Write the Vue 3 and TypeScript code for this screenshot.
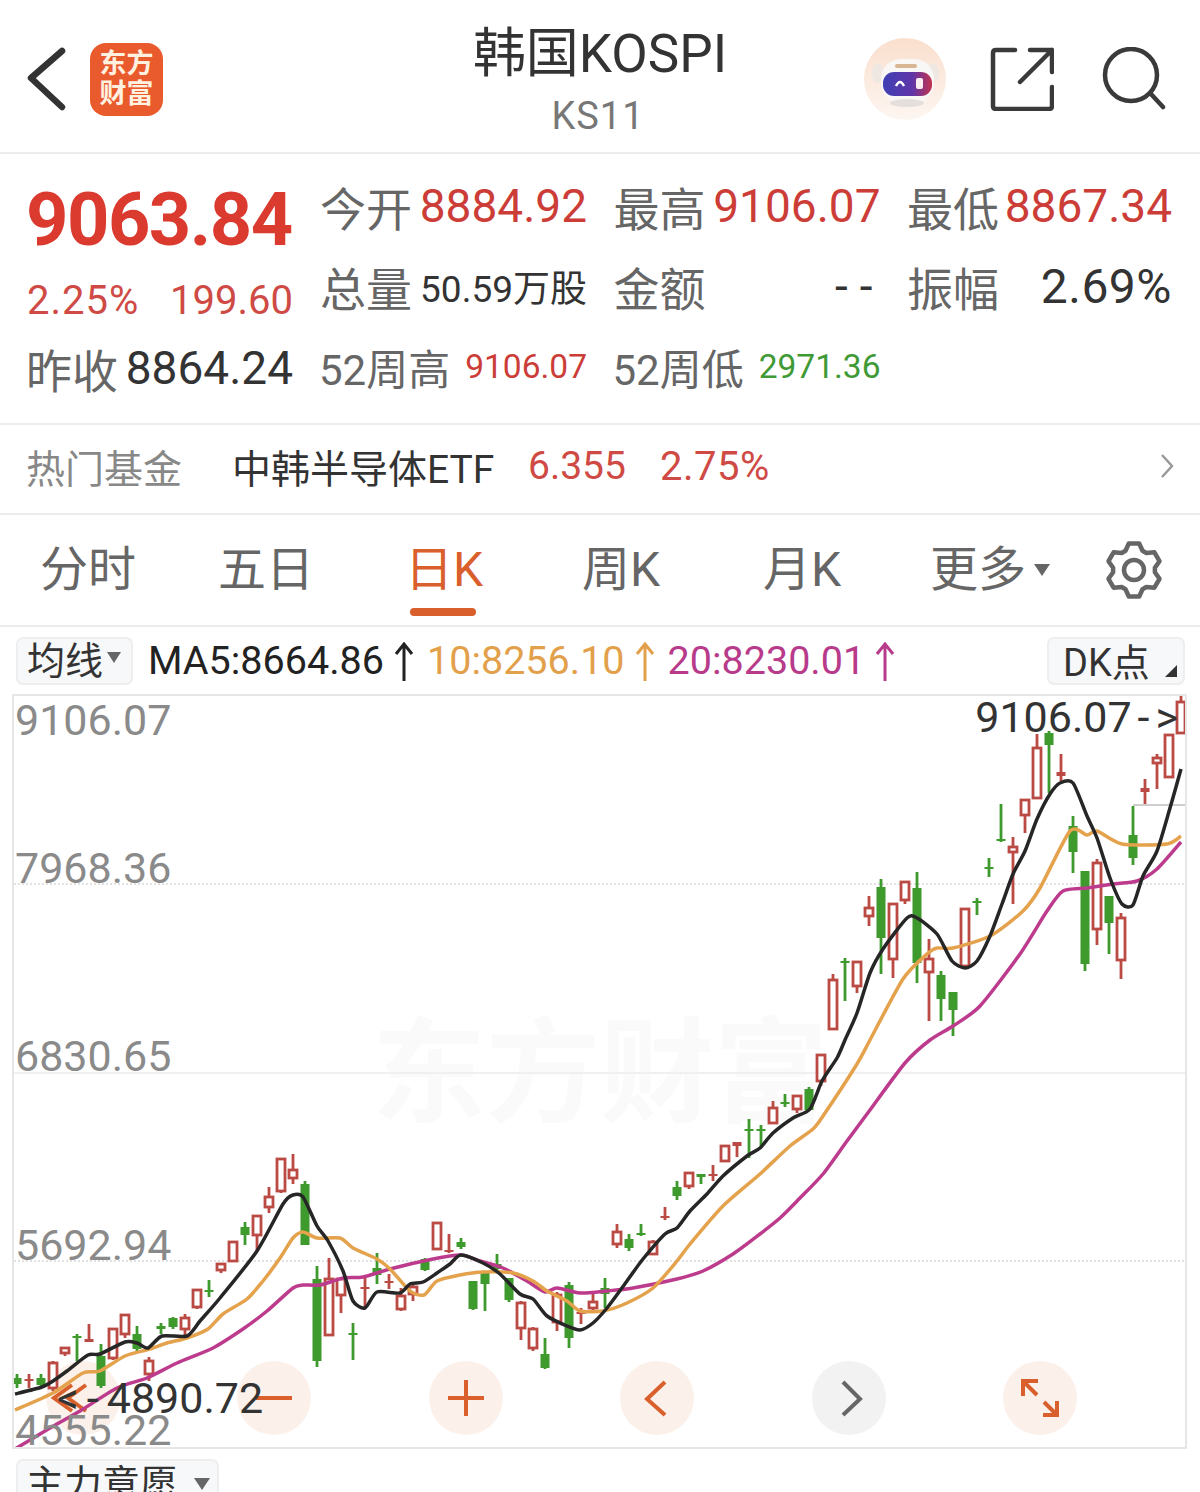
<template>
  <div class="page">
    <header class="topbar">
      <div class="topbar-left">
        <svg class="back" width="40" height="64" viewBox="0 0 40 64"><path d="M36 4 L5 31 L36 60" /></svg>
        <div class="logo">东方<br />财富</div>
      </div>
      <div class="title">
        <div class="name">韩国KOSPI</div>
        <div class="code">KS11</div>
      </div>
      <div class="topbar-right">
        <svg class="robot" width="84" height="84" viewBox="0 0 84 84">
          <defs>
            <linearGradient id="halo" x1="0" y1="0" x2="0" y2="1">
              <stop offset="0" stop-color="#fadfcd" />
              <stop offset="1" stop-color="#fdf6f1" />
            </linearGradient>
            <linearGradient id="visor" x1="0" y1="0" x2="1" y2="0">
              <stop offset="0" stop-color="#3f3fb4" />
              <stop offset="0.6" stop-color="#5f35a8" />
              <stop offset="1" stop-color="#c23350" />
            </linearGradient>
          </defs>
          <circle cx="42" cy="42" r="41" fill="url(#halo)" />
          <ellipse cx="15" cy="36" rx="6" ry="10" fill="#eee7e2" />
          <ellipse cx="70" cy="36" rx="6" ry="10" fill="#eee7e2" />
          <rect x="18" y="22" width="53" height="44" rx="20" fill="#f9f7f6" />
          <rect x="32" y="27" width="22" height="4" rx="2" fill="#d8b694" />
          <rect x="20" y="35" width="49" height="24" rx="11" fill="url(#visor)" />
          <path d="M33 49 Q37 41 41 49" fill="none" stroke="#fff" stroke-width="2.500" />
          <rect x="53" y="41" width="7" height="11" rx="2" fill="#fbeef0" />
          <ellipse cx="44" cy="66" rx="17" ry="4" fill="#e4dfdc" />
        </svg>
        <svg class="share" width="64" height="64" viewBox="0 0 64 64">
          <path d="M25 3 H6 Q3 3 3 6 V59 Q3 62 6 62 H59 Q62 62 62 59 V40" />
          <path d="M30 35 L62 3 M40 3 H62 V25" />
        </svg>
        <svg class="search" width="64" height="64" viewBox="0 0 64 64">
          <circle cx="29" cy="28" r="26" />
          <path d="M49 47 L61 60" />
        </svg>
      </div>
    </header>

    <section class="quote">
      <div class="quote-left">
        <div class="price">9063.84</div>
        <div class="change"><span>2.25%</span><span>199.60</span></div>
        <div class="prev"><span class="label">昨收</span><span class="val">8864.24</span></div>
      </div>
      <div class="quote-grid">
        <div v-for="c in cells" :key="c.label" class="cell">
          <span :class="['label', { week: c.label.startsWith('52') }]">{{ c.label }}</span>
          <span :class="['val', c.cls]">{{ c.value }}</span>
        </div>
      </div>
    </section>

    <section class="fund">
      <span class="fund-title">热门基金</span>
      <span class="fund-name">中韩半导体ETF</span>
      <span class="fund-price">6.355</span>
      <span class="fund-pct">2.75%</span>
      <svg class="fund-more" width="14" height="26" viewBox="0 0 14 26"><path d="M2 2 L12 13 L2 24" /></svg>
    </section>

    <nav class="tabs">
      <div v-for="t in tabs" :key="t" :class="['tab', { active: t === '日K' }]">{{ t }}</div>
      <div class="tab more">更多<i class="tri"></i></div>
      <svg class="gear" width="58" height="60" viewBox="-29 -30 58 60">
        <path :d="gearPath" />
        <circle r="10" />
      </svg>
    </nav>

    <div class="ma-row">
      <div class="pill ma-pill">均线<i class="tri small"></i></div>
      <span class="ma black">MA5:8664.86</span>
      <svg class="up" width="20" height="40" viewBox="0 0 20 40"><path d="M10 39 V2 M2 12 L10 2 L18 12" stroke="#222" /></svg>
      <span class="ma orange">10:8256.10</span>
      <svg class="up" width="20" height="40" viewBox="0 0 20 40"><path d="M10 39 V2 M2 12 L10 2 L18 12" stroke="#e3a04b" /></svg>
      <span class="ma purple">20:8230.01</span>
      <svg class="up" width="20" height="40" viewBox="0 0 20 40"><path d="M10 39 V2 M2 12 L10 2 L18 12" stroke="#b83a8a" /></svg>
      <div class="pill dk-pill">DK点<i class="corner"></i></div>
    </div>

    <div class="chart">
      <div class="watermark">东方财富</div>
      <div class="zoom-btns">
        <div v-for="b in buttons" :key="b.key" :class="['zbtn', { gray: b.gray }]">
          <svg width="74" height="74" viewBox="0 0 74 74"><path :d="b.d" /></svg>
        </div>
      </div>
      <svg class="plot" width="1171" height="751" viewBox="14 695 1171 751">
        <line x1="14" y1="883" x2="1185" y2="883" class="dot" />
        <line x1="14" y1="1072" x2="1185" y2="1072" class="solid" />
        <line x1="14" y1="1260" x2="1185" y2="1260" class="dot" />
        <line x1="1133" y1="804" x2="1185" y2="804" stroke="#cfcfcf" stroke-width="2" />
        <g v-for="c in bars" :key="c.x">
          <line :x1="c.x" :x2="c.x" :y1="c.wt" :y2="c.wb" :stroke="c.color" stroke-width="2.800" />
          <rect
            :x="c.x - (c.solid ? 4.500 : 4)"
            :y="c.top"
            :width="c.solid ? 9 : 8"
            :height="c.h"
            :fill="c.solid ? c.color : '#fff'"
            :stroke="c.solid ? 'none' : c.color"
            :stroke-width="c.solid ? 0 : 2.800"
          />
        </g>
        <path :d="ma20Path" class="ln" stroke="#bd3b8c" />
        <path :d="ma10Path" class="ln" stroke="#e5a24d" />
        <path :d="ma5Path" class="ln" stroke="#262626" />
      </svg>
      <span class="axis" style="top: 8px">9106.07</span>
      <span class="axis" style="top: 156px">7968.36</span>
      <span class="axis" style="top: 344px">6830.65</span>
      <span class="axis" style="top: 533px">5692.94</span>
      <span class="axis" style="top: 718px">4555.22</span>
      <span class="peak hi">9106.07<span class="dash">-</span>&gt;</span>
      <span class="peak lo">&lt;<span class="dash wide">-</span>4890.72</span>
    </div>

    <div class="sub-row">
      <div class="pill sub-pill">主力意愿<i class="tri"></i></div>
    </div>
  </div>
</template>

<script setup lang="ts">
type Bar = [number, number, number, number, number, 'r' | 'g'];
type Pt = [number, number];

const cells = [
  { label: '今开', value: '8884.92', cls: 'red' },
  { label: '最高', value: '9106.07', cls: 'red' },
  { label: '最低', value: '8867.34', cls: 'red' },
  { label: '总量', value: '50.59万股', cls: 'vol' },
  { label: '金额', value: '--', cls: 'dash' },
  { label: '振幅', value: '2.69%', cls: 'amp' },
  { label: '52周高', value: '9106.07', cls: 'red sm' },
  { label: '52周低', value: '2971.36', cls: 'green sm' },
];

const tabs = ['分时', '五日', '日K', '周K', '月K'];

const buttons = [
  { key: 'first', d: 'M26 24 L8 37 L26 50 M40 24 L22 37 L40 50', gray: false },
  { key: 'out', d: 'M19 37 H55', gray: false },
  { key: 'in', d: 'M19 37 H55 M37 19 V55', gray: false },
  { key: 'prev', d: 'M45 21 L27 38 L45 54', gray: false },
  { key: 'next', d: 'M31 21 L48 38 L31 54', gray: true },
  { key: 'full', d: 'M20 35 V20 H35 M20 20 L34 34 M54 40 V54 H40 M54 54 L41 41', gray: false },
];

// tooth outline of the settings icon, six teeth
const gearPath = (() => {
  const pts: string[] = [];
  for (let k = 0; k < 6; k++) {
    const a = -90 + 60 * k;
    for (const [off, r] of [[-24, 21], [-11, 27], [11, 27], [24, 21]]) {
      const t = ((a + off) * Math.PI) / 180;
      pts.push(`${(r * Math.cos(t)).toFixed(1)} ${(r * Math.sin(t)).toFixed(1)}`);
    }
  }
  return 'M' + pts.join(' L') + ' Z';
})();

// index, body top, body bottom, wick top, wick bottom (page px)
const raw: Bar[] = [
  [0, 1377, 1383, 1373, 1387, 'g'], [1, 1378, 1380, 1373, 1387, 'r'], [2, 1377, 1384, 1373, 1386, 'g'],
  [3, 1362, 1387, 1360, 1390, 'r'], [4, 1347, 1352, 1346, 1355, 'r'], [5, 1335, 1337, 1333, 1360, 'g'],
  [6, 1338, 1341, 1323, 1341, 'r'], [7, 1355, 1385, 1343, 1387, 'g'], [8, 1328, 1357, 1328, 1359, 'r'],
  [9, 1314, 1333, 1314, 1337, 'r'], [10, 1333, 1348, 1325, 1351, 'g'], [11, 1360, 1373, 1356, 1380, 'r'],
  [12, 1325, 1328, 1322, 1333, 'g'], [13, 1317, 1326, 1316, 1328, 'g'], [14, 1317, 1328, 1313, 1337, 'r'],
  [15, 1289, 1306, 1289, 1308, 'r'], [16, 1289, 1291, 1279, 1296, 'g'], [17, 1263, 1269, 1263, 1272, 'r'],
  [18, 1241, 1260, 1241, 1261, 'r'], [19, 1226, 1234, 1221, 1244, 'g'], [20, 1215, 1234, 1215, 1250, 'r'],
  [21, 1196, 1206, 1186, 1212, 'r'], [22, 1158, 1190, 1158, 1192, 'r'], [23, 1169, 1177, 1153, 1183, 'r'],
  [24, 1183, 1244, 1180, 1244, 'g'], [25, 1278, 1360, 1265, 1366, 'g'], [26, 1278, 1334, 1257, 1334, 'r'],
  [27, 1278, 1294, 1278, 1312, 'r'], [28, 1332, 1334, 1322, 1359, 'g'], [29, 1286, 1288, 1276, 1307, 'r'],
  [30, 1267, 1274, 1252, 1283, 'g'], [31, 1280, 1282, 1273, 1288, 'r'], [32, 1295, 1308, 1287, 1310, 'r'],
  [33, 1286, 1293, 1284, 1300, 'r'], [34, 1258, 1269, 1257, 1270, 'g'], [35, 1222, 1248, 1222, 1249, 'r'],
  [36, 1249, 1251, 1233, 1252, 'r'], [37, 1241, 1246, 1237, 1248, 'g'], [38, 1280, 1308, 1280, 1309, 'g'],
  [39, 1272, 1283, 1270, 1310, 'g'], [40, 1263, 1268, 1253, 1270, 'g'], [41, 1277, 1299, 1277, 1301, 'g'],
  [42, 1302, 1327, 1300, 1339, 'r'], [43, 1328, 1347, 1326, 1350, 'r'], [44, 1353, 1367, 1337, 1368, 'g'],
  [45, 1294, 1321, 1291, 1330, 'r'], [46, 1284, 1337, 1281, 1347, 'g'], [47, 1311, 1313, 1307, 1323, 'r'],
  [48, 1301, 1307, 1290, 1310, 'r'], [49, 1287, 1293, 1277, 1307, 'g'], [50, 1231, 1243, 1223, 1247, 'r'],
  [51, 1238, 1247, 1233, 1250, 'g'], [52, 1232, 1234, 1223, 1235, 'g'], [53, 1241, 1253, 1239, 1254, 'r'],
  [54, 1215, 1217, 1206, 1219, 'r'], [55, 1186, 1195, 1180, 1199, 'g'], [56, 1172, 1185, 1172, 1188, 'r'],
  [57, 1173, 1176, 1173, 1183, 'g'], [58, 1173, 1175, 1164, 1180, 'r'], [59, 1145, 1160, 1145, 1161, 'r'],
  [60, 1141, 1145, 1141, 1156, 'r'], [61, 1128, 1130, 1118, 1157, 'g'], [62, 1128, 1130, 1124, 1145, 'g'],
  [63, 1107, 1122, 1100, 1123, 'r'], [64, 1101, 1103, 1093, 1106, 'g'], [65, 1095, 1108, 1095, 1112, 'r'],
  [66, 1088, 1109, 1086, 1109, 'g'], [67, 1054, 1080, 1054, 1085, 'r'], [68, 979, 1028, 973, 1029, 'r'],
  [69, 960, 962, 957, 1000, 'g'], [70, 961, 985, 961, 992, 'r'], [71, 907, 915, 895, 925, 'r'],
  [72, 886, 937, 878, 973, 'g'], [73, 903, 958, 903, 977, 'r'], [74, 881, 899, 881, 903, 'r'],
  [75, 887, 962, 871, 982, 'g'], [76, 958, 971, 938, 1020, 'r'], [77, 974, 998, 970, 1020, 'g'],
  [78, 991, 1009, 991, 1035, 'g'], [79, 908, 965, 908, 966, 'r'], [80, 900, 902, 897, 914, 'g'],
  [81, 866, 868, 857, 876, 'g'], [82, 838, 840, 803, 841, 'g'], [83, 846, 851, 836, 903, 'r'],
  [84, 799, 814, 799, 832, 'r'], [85, 747, 797, 733, 798, 'r'], [86, 732, 744, 730, 792, 'g'],
  [87, 771, 775, 753, 780, 'r'], [88, 825, 851, 815, 872, 'g'], [89, 870, 963, 870, 970, 'g'],
  [90, 862, 928, 858, 944, 'r'], [91, 895, 922, 895, 953, 'g'], [92, 917, 959, 912, 978, 'r'],
  [93, 834, 857, 805, 864, 'g'], [94, 787, 791, 778, 803, 'r'], [95, 757, 762, 753, 788, 'r'],
  [96, 734, 776, 734, 777, 'r'], [97, 701, 732, 695, 733, 'r'],
];

const bars = raw.map(([i, top, bot, wt, wb, kind]) => ({
  x: 17 + i * 12,
  top,
  h: bot - top,
  wt,
  wb,
  color: kind === 'r' ? '#bb4a45' : '#3f9a2e',
  solid: kind === 'g' || bot - top < 5,
}));

const ma5: Pt[] = [
  [15, 1393], [42, 1386], [53, 1380], [67, 1370], [88, 1354], [100, 1353], [125, 1341], [137, 1342], [148, 1347],
  [162, 1335], [187, 1335], [200, 1320], [220, 1297], [257, 1250], [283, 1203], [293, 1194], [303, 1196], [317, 1225],
  [328, 1240], [343, 1270], [353, 1300], [365, 1307], [377, 1291], [400, 1292], [410, 1283], [423, 1281], [437, 1272],
  [450, 1263], [461, 1254], [483, 1262], [500, 1273], [520, 1293], [533, 1298], [547, 1315], [567, 1325], [580, 1329],
  [593, 1322], [607, 1307], [627, 1280], [643, 1258], [665, 1233], [677, 1227], [690, 1210], [707, 1193], [723, 1175],
  [747, 1155], [760, 1147], [773, 1132], [793, 1117], [810, 1108], [822, 1080], [837, 1057], [845, 1039], [857, 1012],
  [870, 972], [883, 948], [907, 917], [917, 917], [937, 933], [952, 960], [965, 967], [977, 960], [990, 935], [1002, 903],
  [1013, 873], [1025, 850], [1037, 818], [1050, 793], [1060, 782], [1073, 782], [1087, 815], [1097, 837], [1110, 877],
  [1122, 903], [1133, 904], [1143, 875], [1157, 850], [1170, 807], [1181, 768],
];

const ma10: Pt[] = [
  [15, 1409], [53, 1392], [83, 1372], [100, 1370], [125, 1355], [150, 1348], [167, 1342], [187, 1337], [208, 1328],
  [223, 1313], [247, 1298], [263, 1280], [280, 1257], [293, 1237], [303, 1231], [317, 1237], [340, 1237], [353, 1247],
  [377, 1258], [390, 1268], [410, 1290], [424, 1294], [437, 1280], [460, 1274], [483, 1271], [513, 1272], [533, 1280],
  [547, 1290], [567, 1300], [580, 1310], [603, 1310], [627, 1302], [653, 1287], [677, 1260], [690, 1243], [723, 1205],
  [760, 1173], [790, 1145], [813, 1128], [823, 1115], [857, 1063], [870, 1039], [903, 978], [927, 953], [937, 947],
  [953, 947], [990, 935], [1023, 910], [1040, 887], [1070, 830], [1087, 834], [1097, 830], [1122, 843], [1167, 843],
  [1181, 835],
];

const ma20: Pt[] = [
  [15, 1448], [50, 1427], [80, 1410], [117, 1387], [147, 1377], [177, 1362], [213, 1347], [243, 1328], [267, 1310],
  [293, 1287], [303, 1284], [320, 1284], [343, 1277], [363, 1276], [390, 1268], [433, 1258], [461, 1254], [480, 1260],
  [503, 1267], [527, 1280], [545, 1291], [557, 1287], [580, 1292], [607, 1290], [633, 1287], [677, 1278], [703, 1270],
  [733, 1253], [760, 1233], [780, 1217], [800, 1197], [823, 1173], [847, 1140], [867, 1113], [905, 1062], [930, 1039],
  [953, 1025], [980, 1005], [1020, 953], [1047, 910], [1063, 890], [1087, 887], [1113, 883], [1137, 880], [1157, 868],
  [1181, 841],
];

// catmull-rom through the points so the averages read as curves
const smooth = (p: Pt[]): string => {
  let d = `M${p[0][0]} ${p[0][1]}`;
  for (let i = 0; i < p.length - 1; i++) {
    const a = p[Math.max(i - 1, 0)];
    const b = p[i];
    const c = p[i + 1];
    const e = p[Math.min(i + 2, p.length - 1)];
    const k = 0.12;
    d += ` C${(b[0] + (c[0] - a[0]) * k).toFixed(1)} ${(b[1] + (c[1] - a[1]) * k).toFixed(1)} ${(c[0] - (e[0] - b[0]) * k).toFixed(1)} ${(c[1] - (e[1] - b[1]) * k).toFixed(1)} ${c[0]} ${c[1]}`;
  }
  return d;
};

const ma5Path = smooth(ma5);
const ma10Path = smooth(ma10);
const ma20Path = smooth(ma20);
</script>

<style>
html,
body {
  margin: 0;
  background: #fff;
  overflow: hidden;
}
</style>

<style scoped>
.page {
  width: 1200px;
  height: 1492px;
  overflow: hidden;
  background: #fff;
  font-family: Roboto, "Noto Sans CJK SC", sans-serif;
  color: #333;
}

.topbar {
  height: 154px;
  box-sizing: border-box;
  padding-top: 6px;
  display: grid;
  grid-template-columns: 1fr auto 1fr;
  align-items: center;
  border-bottom: 2px solid #ececec;
}
.topbar-left {
  display: flex;
  align-items: center;
  padding-left: 26px;
  gap: 24px;
}
.back path {
  fill: none;
  stroke: #333;
  stroke-width: 6.500;
  stroke-linecap: round;
  stroke-linejoin: round;
}
.logo {
  width: 73px;
  height: 73px;
  border-radius: 16px;
  background: #e95a2c;
  color: #fff1e0;
  font-weight: 700;
  font-size: 27px;
  line-height: 30px;
  text-align: center;
  padding-top: 6px;
  box-sizing: border-box;
}
.title {
  text-align: center;
}
.name {
  font-size: 53px;
  line-height: 60px;
  margin-top: 4px;
  color: #333;
}
.code {
  font-size: 38px;
  line-height: 44px;
  margin: 10px 4px 0 0;
  color: #777;
  letter-spacing: 1px;
}
.topbar-right {
  display: flex;
  align-items: center;
  justify-content: flex-end;
  padding-right: 34px;
}
.robot {
  margin-right: 43px;
  filter: blur(0.6px);
}
.share {
  margin-right: 48px;
}
.share path,
.search circle,
.search path {
  fill: none;
  stroke: #3a3a3a;
  stroke-width: 4.500;
  stroke-linecap: round;
  stroke-linejoin: round;
}

.quote {
  display: flex;
  padding: 12px 28px 15px 27px;
  height: 242px;
  box-sizing: content-box;
  border-bottom: 2px solid #ececec;
}
.quote-left {
  width: 266px;
  margin-right: 28px;
  flex: none;
}
.price {
  height: 108px;
  line-height: 108px;
  margin-left: -1px;
  font-size: 74px;
  font-weight: 700;
  letter-spacing: -1.500px;
  color: #db3a2f;
  white-space: nowrap;
}
.change {
  height: 54px;
  line-height: 54px;
  font-size: 40px;
  color: #cf4a44;
  display: flex;
  justify-content: space-between;
}
.change span:first-child {
  letter-spacing: 1px;
}
.prev {
  height: 80px;
  display: flex;
  justify-content: space-between;
  align-items: center;
}
.quote-grid {
  display: grid;
  grid-template-columns: 266px 266px 264px;
  grid-auto-rows: 80px;
  column-gap: 27.500px;
  align-content: start;
}
.cell {
  display: flex;
  justify-content: space-between;
  align-items: center;
  white-space: nowrap;
}
.label {
  font-size: 46px;
  color: #666;
  margin-left: -1px;
}
.label.week {
  font-size: 42px;
  margin-left: -2px;
}
.val {
  font-size: 46px;
  color: #333;
}
.val.red {
  color: #cc3d38;
}
.val.green {
  color: #3f9a35;
}
.val.sm {
  font-size: 33.500px;
}
.val.vol {
  font-size: 37px;
}
.val.dash {
  letter-spacing: 12px;
  margin-right: -10px;
}
.val.amp {
  font-size: 48px;
  letter-spacing: 0.500px;
}

.fund {
  height: 82px;
  padding: 0 24px 6px 26px;
  border-bottom: 2px solid #ececec;
  display: flex;
  align-items: center;
  font-size: 39px;
  white-space: nowrap;
}
.fund-title {
  color: #888;
  width: 206px;
}
.fund-name {
  color: #333;
  width: 296px;
}
.fund-price {
  color: #cf4a44;
  width: 132px;
}
.fund-pct {
  color: #cf4a44;
  font-size: 40px;
  letter-spacing: 0.500px;
}
.fund-more {
  margin-left: auto;
  margin-right: 2px;
}
.fund-more path {
  fill: none;
  stroke: #999;
  stroke-width: 2.500;
}

.tabs {
  height: 110px;
  border-bottom: 2px solid #ececec;
  box-sizing: content-box;
  display: grid;
  grid-template-columns: 178px 187px 177px 181px 167px 175px auto;
  align-items: center;
  padding-left: 40px;
  font-size: 48px;
  color: #666;
}
.tab {
  position: relative;
  line-height: 110px;
  white-space: nowrap;
}
.tab.active {
  color: #d9602c;
}
.tab.active::after {
  content: "";
  position: absolute;
  left: 5px;
  bottom: 9px;
  width: 66px;
  height: 8px;
  border-radius: 4px;
  background: #d9602c;
}
.tab.more {
  display: flex;
  align-items: center;
}
.tri {
  display: inline-block;
  width: 0;
  height: 0;
  margin-left: 8px;
  border-left: 8px solid transparent;
  border-right: 8px solid transparent;
  border-top: 12px solid #666;
}
.tri.small {
  margin-left: 4px;
  border-left-width: 7px;
  border-right-width: 7px;
  border-top-width: 11px;
}
.gear path,
.gear circle {
  fill: none;
  stroke: #666;
  stroke-width: 4.500;
  stroke-linejoin: round;
}

.ma-row {
  height: 67px;
  display: flex;
  align-items: center;
  padding: 0 15px 0 16px;
  font-size: 39.500px;
  white-space: nowrap;
}
.pill {
  display: flex;
  align-items: center;
  height: 48px;
  box-sizing: border-box;
  background: #f7f8f9;
  border: 2px solid #eeeeee;
  border-radius: 7px;
  font-size: 38px;
  color: #333;
}
.ma-pill {
  width: 117px;
  padding: 0 0 6px 9px;
  margin-right: 15px;
}
.dk-pill {
  position: relative;
  width: 138px;
  margin-left: auto;
  padding: 0 0 2px 14px;
}
.corner {
  position: absolute;
  right: 6px;
  bottom: 6px;
  width: 0;
  height: 0;
  border-left: 12px solid transparent;
  border-bottom: 12px solid #333;
}
.ma.black {
  color: #222;
}
.ma.orange {
  color: #e3a04b;
}
.ma.purple {
  color: #b83a8a;
}
.up {
  margin: 2px 13px 0 10px;
}
.up path {
  fill: none;
  stroke-width: 3;
}

.chart {
  position: relative;
  box-sizing: border-box;
  width: 1175px;
  height: 755px;
  margin-left: 12px;
  border: 2px solid #e6e6e6;
}
.watermark {
  position: absolute;
  left: 358px;
  top: 318px;
  font-size: 114px;
  line-height: 120px;
  font-weight: 700;
  color: #fafafa;
  white-space: nowrap;
}
.zoom-btns {
  position: absolute;
  left: 32px;
  top: 665px;
  display: flex;
  gap: 117.400px;
}
.zbtn {
  width: 74px;
  height: 74px;
  border-radius: 50%;
  background: #fbf1ea;
}
.zbtn.gray {
  background: #f2f2f2;
}
.zbtn path {
  fill: none;
  stroke: #d9602c;
  stroke-width: 4;
}
.zbtn.gray path {
  stroke: #666;
}
.plot {
  position: absolute;
  left: 0;
  top: 0;
}
.dot {
  stroke: #e2e2e2;
  stroke-width: 2;
  stroke-dasharray: 2 2;
}
.solid {
  stroke: #f0f0f0;
  stroke-width: 2;
}
.ln {
  fill: none;
  stroke-width: 3.500;
  stroke-linejoin: round;
}
.axis {
  position: absolute;
  left: 1px;
  font-size: 43px;
  line-height: 32px;
  color: #8a8a8a;
}
.peak {
  position: absolute;
  font-size: 43px;
  line-height: 42px;
  color: #333;
  white-space: nowrap;
}
.peak.hi {
  right: 7px;
  top: 0;
}
.peak.lo {
  left: 43px;
  top: 681px;
}
.dash {
  padding: 0 6px;
}
.dash.wide {
  padding: 0 8px;
}

.sub-row {
  padding: 10px 0 0 16px;
}
.sub-pill {
  width: 203px;
  height: 60px;
  padding: 1px 0 0 8px;
  align-items: flex-start;
  line-height: 44px;
}
.sub-pill .tri {
  margin: 16px 0 0 16px;
}
</style>
